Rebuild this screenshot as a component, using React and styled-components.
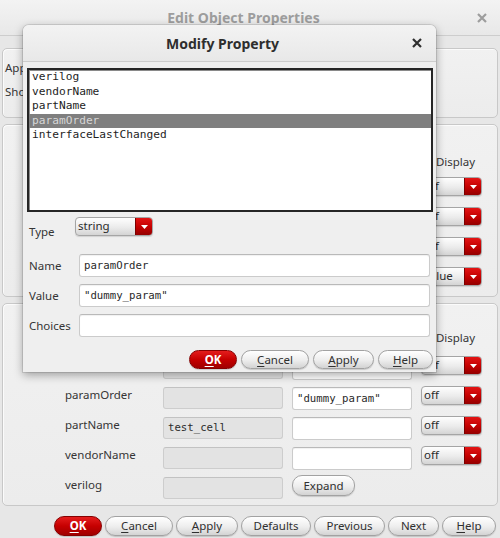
import styled, { createGlobalStyle } from "styled-components";

const GlobalStyle = createGlobalStyle`
  html, body {
    margin: 0;
    padding: 0;
  }
  body {
    background: #e7e7e7;
    font-family: "Noto Sans", "Open Sans", sans-serif;
    color: #333;
  }
`;

const MONO = `"DejaVu Sans Mono", "Liberation Mono", monospace`;

const Desktop = styled.div`
  position: relative;
  width: 500px;
  height: 538px;
  overflow: hidden;
`;

const Window = styled.div`
  display: flex;
  flex-direction: column;
  height: 100%;
  background: #e7e7e7;
`;

const TitleBar = styled.div`
  box-sizing: border-box;
  flex: none;
  display: grid;
  grid-template-columns: 1fr auto 1fr;
  align-items: center;
  height: ${(p) => p.$h}px;
  padding-right: ${(p) => p.$pr}px;
  background: linear-gradient(#f3f3f3, #e8e8e8);
  border-bottom: 1px solid #cdcdcd;
  border-radius: ${(p) => (p.$rounded ? "6px 6px 0 0" : "0")};
`;

const Title = styled.div`
  grid-column: 2;
  font-size: 14px;
  font-weight: 700;
  color: ${(p) => (p.$dim ? "#9d9d9d" : "#2e2e2e")};
`;

const CloseBox = styled.div`
  justify-self: end;
  display: flex;
  color: ${(p) => (p.$dim ? "#9d9d9d" : "#2e2e2e")};
`;

const Body = styled.div`
  flex: 1;
  display: flex;
  flex-direction: column;
  gap: 6px;
  padding: 12px 2px 0;
`;

const Panel = styled.section`
  box-sizing: border-box;
  flex: none;
  height: ${(p) => p.$h}px;
  border: 1px solid #c8c8c8;
  border-radius: 5px;
  background: linear-gradient(#f1f1f1, #ececec);
  box-shadow: inset 1px 1px 0 #fbfbfb;
`;

const OptionList = styled.div`
  display: flex;
  flex-direction: column;
  gap: 8px;
  padding: 11px 2px 0;
`;

const Label = styled.div`
  font-size: 11.5px;
  line-height: 16px;
  color: #353535;
  white-space: nowrap;
`;

const PropGrid = styled.div`
  display: grid;
  grid-template-columns: 89px 120px 120px 61px;
  column-gap: 9px;
  row-gap: 7px;
  align-items: start;
  padding: ${(p) => p.$top}px 0 0 62px;
`;

const ColHead = styled.div`
  grid-column: 4;
  height: ${(p) => p.$h}px;
  line-height: ${(p) => p.$h}px;
  font-size: 11.5px;
  color: #353535;
  text-align: center;
  padding-left: 8px;
`;

const ReadField = styled.div`
  box-sizing: border-box;
  height: 22px;
  padding: 0 4px;
  border: 1px solid #cdcdcd;
  border-top-color: #c2c2c2;
  border-radius: 3px;
  background: #e3e3e3;
  font-family: ${MONO};
  font-size: 10.7px;
  line-height: 20px;
  color: #2c2c2c;
  white-space: nowrap;
  overflow: hidden;
`;

const TextField = styled.div`
  box-sizing: border-box;
  height: 23px;
  margin-left: ${(p) => p.$ml || 0}px;
  padding: 0 4px;
  border: 1px solid #cbcbcb;
  border-top-color: #b9b9b9;
  border-radius: 3px;
  background: #fff;
  box-shadow: inset 0 1px 1px rgba(0, 0, 0, 0.06);
  font-family: ${MONO};
  font-size: 10.7px;
  line-height: 21px;
  color: #2a2a2a;
  white-space: nowrap;
  overflow: hidden;
`;

const ComboBox = styled.div`
  box-sizing: border-box;
  display: flex;
  align-self: start;
  width: ${(p) => p.$w}px;
  height: 19px;
  margin-top: ${(p) => p.$mt || 0}px;
  border: 1px solid #a5a5a5;
  border-radius: 4px;
  overflow: hidden;
  background: linear-gradient(#fefefe, #ebebeb 55%, #d4d4d4);
  box-shadow: 0 1px 1px rgba(0, 0, 0, 0.12);
`;

const ComboText = styled.span`
  flex: 1;
  padding-left: 2px;
  font-size: 11.5px;
  line-height: 16px;
  color: #2b2b2b;
  white-space: nowrap;
  overflow: hidden;
`;

const ComboArrow = styled.span`
  flex: none;
  display: flex;
  align-items: center;
  justify-content: center;
  width: 16px;
  background: linear-gradient(#e31414, #c20000 55%, #930000);
  border-left: 1px solid #7a0000;
`;

const Button = styled.button`
  box-sizing: border-box;
  flex: none;
  width: ${(p) => p.$w}px;
  height: ${(p) => p.$h}px;
  margin-top: ${(p) => p.$mt || 0}px;
  padding: 0;
  border: 1px solid ${(p) => (p.$primary ? "#860000" : "#a2a2a2")};
  border-radius: 10px;
  background: ${(p) =>
    p.$primary
      ? "linear-gradient(#e41d1d, #c60000 50%, #a00000)"
      : "linear-gradient(#ffffff, #ededed 55%, #d3d3d3)"};
  box-shadow: 0 1px 1px rgba(0, 0, 0, 0.16);
  color: ${(p) => (p.$primary ? "#fff" : "#303030")};
  font-family: inherit;
  font-size: 11.5px;
  font-weight: ${(p) => (p.$primary ? 700 : 400)};
  line-height: 1;
`;

const Mn = styled.span`
  text-decoration: underline;
  text-underline-offset: 2px;
`;

const ButtonRow = styled.div`
  display: flex;
  justify-content: flex-end;
  gap: ${(p) => p.$gap}px;
  margin-top: ${(p) => p.$mt}px;
  padding-right: ${(p) => p.$pr}px;
`;

/* the Modify Property window sits over the Edit Object Properties window */
const Dialog = styled.div`
  position: absolute;
  left: 23px;
  top: 25px;
  width: 413px;
  height: 347px;
  display: flex;
  flex-direction: column;
  background: #efefef;
  border-radius: 6px 6px 0 0;
  box-shadow: 0 3px 10px rgba(0, 0, 0, 0.35), 0 0 0 1px rgba(0, 0, 0, 0.1);
`;

const DialogBody = styled.div`
  display: flex;
  flex-direction: column;
  padding: 6px 3px 0 4px;
`;

const ListBox = styled.div`
  box-sizing: border-box;
  height: 144px;
  border: 2px solid #262626;
  box-shadow: inset 1px 1px 0 #8a8a8a;
  background: #fff;
`;

const ListItem = styled.div`
  padding-left: 3px;
  font-family: ${MONO};
  font-size: 11.2px;
  line-height: 14.5px;
  background: ${(p) => (p.$selected ? "#7f7f7f" : "transparent")};
  color: ${(p) => (p.$selected ? "#d6d6d6" : "#1e1e1e")};
`;

const Form = styled.div`
  display: grid;
  grid-template-columns: 46px 1fr;
  row-gap: 7px;
  align-items: center;
  margin-top: 5px;
  padding: 0 3px 0 2px;
`;

const FormLabel = styled.div`
  height: ${(p) => p.$h || 23}px;
  line-height: ${(p) => p.$h || 23}px;
  font-size: 11.5px;
  color: #353535;
`;

const Close = ({ dim }) => (
  <CloseBox $dim={dim}>
    <svg width="10" height="10" viewBox="0 0 10 10">
      <path d="M1 1 L9 9 M9 1 L1 9" stroke="currentColor" strokeWidth="2.2" />
    </svg>
  </CloseBox>
);

const Combo = ({ w, mt, children }) => (
  <ComboBox $w={w} $mt={mt}>
    <ComboText>{children}</ComboText>
    <ComboArrow>
      <svg width="7" height="4" viewBox="0 0 7 4">
        <polygon points="0,0 7,0 3.5,4" fill="#fff" />
      </svg>
    </ComboArrow>
  </ComboBox>
);

const upperRows = [
  { name: "Library Name", value: "", display: "off" },
  { name: "Cell Name", value: "", display: "off" },
  { name: "View Name", value: "", display: "off" },
  { name: "Instance Name", value: "", display: "value" },
];

const lowerRows = [
  { name: "interfaceLastChanged", read: "21 15:47:11 2022", value: "", display: "off" },
  { name: "paramOrder", read: "", value: '"dummy_param"', display: "off" },
  { name: "partName", read: "test_cell", value: "", display: "off" },
  { name: "vendorName", read: "", value: "", display: "off" },
];

const properties = ["verilog", "vendorName", "partName", "paramOrder", "interfaceLastChanged"];

const PropRow = ({ row }) => (
  <>
    <Label>{row.name}</Label>
    <ReadField>{row.read}</ReadField>
    <TextField>{row.value}</TextField>
    <Combo w={61} mt={-1}>
      {row.display}
    </Combo>
  </>
);

export default function App() {
  return (
    <Desktop>
      <GlobalStyle />
      <Window>
        <TitleBar $h={36} $pr={13}>
          <Title $dim>Edit Object Properties</Title>
          <Close dim />
        </TitleBar>
        <Body>
          <Panel $h={70}>
            <OptionList>
              <Label>Apply To</Label>
              <Label>Show</Label>
            </OptionList>
          </Panel>
          <Panel $h={173}>
            <PropGrid $top={28}>
              <ColHead $h={18}>Display</ColHead>
              {upperRows.map((r) => (
                <PropRow key={r.name} row={r} />
              ))}
            </PropGrid>
          </Panel>
          <Panel $h={203}>
            <PropGrid $top={22}>
              <ColHead $h={24}>Display</ColHead>
              {lowerRows.map((r) => (
                <PropRow key={r.name} row={r} />
              ))}
              <Label>verilog</Label>
              <ReadField />
              <Button $w={63} $h={21} $mt={-2}>
                Expand
              </Button>
            </PropGrid>
          </Panel>
          <ButtonRow $gap={3} $mt={4} $pr={2}>
            <Button $primary $w={48} $h={20}>
              <Mn>O</Mn>K
            </Button>
            <Button $w={68} $h={20}>
              <Mn>C</Mn>ancel
            </Button>
            <Button $w={62} $h={20}>
              <Mn>A</Mn>pply
            </Button>
            <Button $w={70} $h={20}>
              Defaults
            </Button>
            <Button $w={71} $h={20}>
              Previous
            </Button>
            <Button $w={51} $h={20}>
              Next
            </Button>
            <Button $w={54} $h={20}>
              <Mn>H</Mn>elp
            </Button>
          </ButtonRow>
        </Body>
      </Window>

      <Dialog>
        <TitleBar $h={37} $pr={14} $rounded>
          <Title>Modify Property</Title>
          <Close />
        </TitleBar>
        <DialogBody>
          <ListBox>
            {properties.map((p) => (
              <ListItem key={p} $selected={p === "paramOrder"}>
                {p}
              </ListItem>
            ))}
          </ListBox>
          <Form>
            <FormLabel $h={30}>Type</FormLabel>
            <Combo w={78}>string</Combo>
            <FormLabel>Name</FormLabel>
            <TextField $ml={4}>paramOrder</TextField>
            <FormLabel>Value</FormLabel>
            <TextField $ml={4}>"dummy_param"</TextField>
            <FormLabel>Choices</FormLabel>
            <TextField $ml={4} />
          </Form>
          <ButtonRow $gap={4} $mt={13} $pr={0}>
            <Button $primary $w={48} $h={19}>
              <Mn>O</Mn>K
            </Button>
            <Button $w={68} $h={19}>
              <Mn>C</Mn>ancel
            </Button>
            <Button $w={61} $h={19}>
              <Mn>A</Mn>pply
            </Button>
            <Button $w={55} $h={19}>
              <Mn>H</Mn>elp
            </Button>
          </ButtonRow>
        </DialogBody>
      </Dialog>
    </Desktop>
  );
}
